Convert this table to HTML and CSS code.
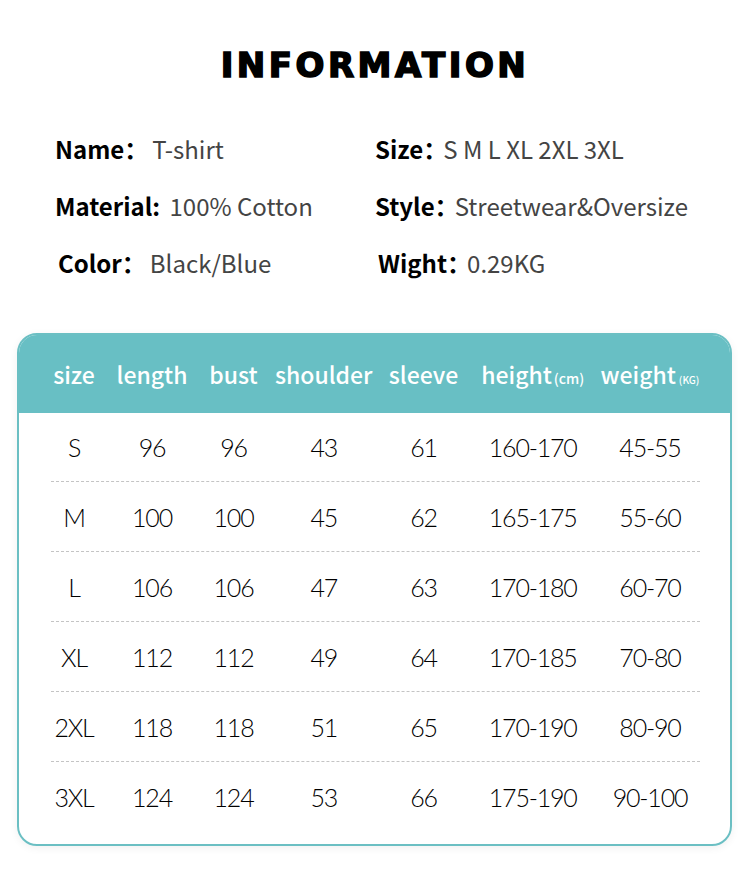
FILE: index.html
```
<!DOCTYPE html>
<html>
<head>
<meta charset="utf-8">
<link rel="stylesheet" href="styles.css">
</head>
<body>
<div class="page">
  <h1 class="title">INFORMATION</h1>
  <div class="info">
    <div class="item"><span class="label">Name：</span><span class="value">T-shirt</span></div>
    <div class="item right"><span class="label">Size：</span><span class="value">S M L XL 2XL 3XL</span></div>
    <div class="item"><span class="label">Material: </span><span class="value">100% Cotton</span></div>
    <div class="item right"><span class="label">Style：</span><span class="value">Streetwear&amp;Oversize</span></div>
    <div class="item indent"><span class="label">Color：</span><span class="value">Black/Blue</span></div>
    <div class="item right indent"><span class="label">Wight：</span><span class="value">0.29KG</span></div>
  </div>
  <div class="table">
    <div class="thead">
      <div>size</div><div>length</div><div>bust</div><div>shoulder</div><div>sleeve</div>
      <div>height<small class="cm">(cm)</small></div><div>weight<small class="kg">(KG)</small></div>
    </div>
    <div class="tbody">
      <div class="row"><div>S</div><div>96</div><div>96</div><div>43</div><div>61</div><div>160-170</div><div>45-55</div></div>
      <div class="sep"></div>
      <div class="row"><div>M</div><div>100</div><div>100</div><div>45</div><div>62</div><div>165-175</div><div>55-60</div></div>
      <div class="sep"></div>
      <div class="row"><div>L</div><div>106</div><div>106</div><div>47</div><div>63</div><div>170-180</div><div>60-70</div></div>
      <div class="sep"></div>
      <div class="row"><div>XL</div><div>112</div><div>112</div><div>49</div><div>64</div><div>170-185</div><div>70-80</div></div>
      <div class="sep"></div>
      <div class="row"><div>2XL</div><div>118</div><div>118</div><div>51</div><div>65</div><div>170-190</div><div>80-90</div></div>
      <div class="sep"></div>
      <div class="row"><div>3XL</div><div>124</div><div>124</div><div>53</div><div>66</div><div>175-190</div><div>90-100</div></div>
    </div>
  </div>
</div>
</body>
</html>
```
FILE: styles.css
```
* { box-sizing: border-box; }
html, body { margin: 0; padding: 0; background: #fff; }
.page {
  width: 750px;
  height: 874px;
  padding-top: 45px;
  font-family: "Noto Sans CJK SC", "Noto Sans", sans-serif;
}
.title {
  margin: 0;
  height: 40px;
  line-height: 40px;
  text-align: center;
  font-family: "DejaVu Sans", sans-serif;
  font-weight: bold;
  font-size: 34px;
  letter-spacing: 3.5px;
  -webkit-text-stroke: 1.6px #000;
  color: #000;
}
.info {
  margin: 49px 0 0 55px;
  display: grid;
  grid-template-columns: 320px 320px;
  row-gap: 27px;
}
.item {
  height: 30px;
  line-height: 30px;
  font-size: 24px;
  white-space: nowrap;
}
.item.indent { padding-left: 3px; }
.label { font-weight: bold; color: #000; }
.value { color: #444; margin-left: 4px; }
.item.right .value { margin-left: -4px; }
.table {
  margin: 55px 18px 0 17px;
  border: 2px solid #6bbfc3;
  border-radius: 20px;
  overflow: hidden;
  box-shadow: 0 2px 8px rgba(0,0,0,0.06);
}
.thead, .row {
  display: grid;
  grid-template-columns: 78px 78px 85px 95.5px 104px 114.5px 120px;
  padding-left: 16px;
}
.thead {
  height: 78px;
  background: #68bfc4;
  color: #fff;
  font-size: 23px;
  font-weight: 500;
  align-items: center;
  text-align: center;
  white-space: nowrap;
}
.thead > div { display: flex; justify-content: center; align-items: baseline; }
.thead .cm { font-size: 14px; margin-left: 2px; }
.thead .kg { font-size: 10px; margin-left: 3px; }
.tbody { padding-bottom: 13px; }
.row {
  height: 69px;
  align-items: center;
  text-align: center;
  font-family: "Lato", sans-serif;
  font-weight: 300;
  font-size: 25px;
  letter-spacing: -1.2px;
  color: #000;
}
.row:first-child { height: 68px; }
.sep {
  height: 1px;
  margin: 0 30px 0 32px;
  border-top: 1px dashed #c4c4c4;
}
```
